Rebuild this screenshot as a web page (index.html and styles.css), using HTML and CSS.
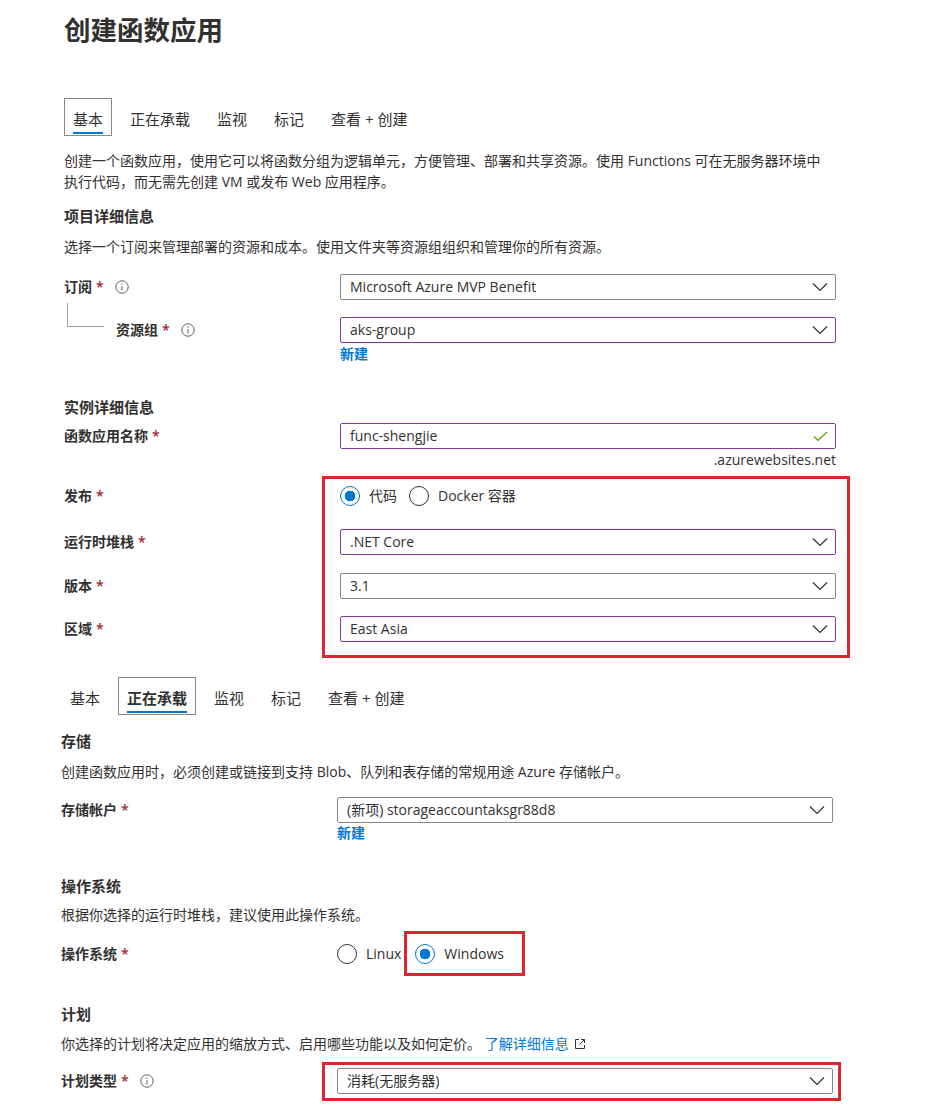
FILE: index.html
```html
<!DOCTYPE html>
<html lang="zh-CN">
<head>
<meta charset="utf-8">
<title>创建函数应用</title>
<link rel="stylesheet" href="styles.css">
</head>
<body>
<div class="page">
  <section class="part part-a">
    <h1 class="title">创建函数应用</h1>
    <nav class="tabs">
      <span class="tab active">基本</span>
      <span class="tab">正在承载</span>
      <span class="tab">监视</span>
      <span class="tab">标记</span>
      <span class="tab">查看 + 创建</span>
    </nav>
    <p class="desc mt14">创建一个函数应用，使用它可以将函数分组为逻辑单元，方便管理、部署和共享资源。使用 Functions 可在无服务器环境中<br>执行代码，而无需先创建 VM 或发布 Web 应用程序。</p>
    <h2 class="sub mt14">项目详细信息</h2>
    <p class="desc mt10">选择一个订阅来管理部署的资源和成本。使用文件夹等资源组组织和管理你的所有资源。</p>

    <div class="row mt17">
      <div class="label">订阅<span class="req">*</span>
        <svg class="info" width="14" height="14" viewBox="0 0 14 14"><circle cx="7" cy="7" r="6.2" fill="none" stroke="#605e5c" stroke-width="1"/><line x1="7" y1="6" x2="7" y2="10.5" stroke="#605e5c" stroke-width="1"/><circle cx="7" cy="4" r="0.7" fill="#605e5c"/></svg>
      </div>
      <div class="control"><div class="select"><span>Microsoft Azure MVP Benefit</span>
        <svg class="chev" width="16" height="10" viewBox="0 0 16 10"><path d="M1 1.5 L8 8.5 L15 1.5" fill="none" stroke="#323130" stroke-width="1.2"/></svg></div></div>
    </div>

    <div class="row mt17">
      <div class="label"><span class="tree"></span>资源组<span class="req">*</span>
        <svg class="info" width="14" height="14" viewBox="0 0 14 14"><circle cx="7" cy="7" r="6.2" fill="none" stroke="#605e5c" stroke-width="1"/><line x1="7" y1="6" x2="7" y2="10.5" stroke="#605e5c" stroke-width="1"/><circle cx="7" cy="4" r="0.7" fill="#605e5c"/></svg>
      </div>
      <div class="control"><div class="select dirty"><span>aks-group</span>
        <svg class="chev" width="16" height="10" viewBox="0 0 16 10"><path d="M1 1.5 L8 8.5 L15 1.5" fill="none" stroke="#323130" stroke-width="1.2"/></svg></div></div>
    </div>
    <div class="newlink mt1"><span class="link strong">新建</span></div>

    <h2 class="sub mt33">实例详细信息</h2>
    <div class="row mt6">
      <div class="label">函数应用名称<span class="req">*</span></div>
      <div class="control"><div class="select dirty"><span>func-shengjie</span>
        <svg class="check" width="15" height="11" viewBox="0 0 15 11"><path d="M1 5.5 L5 9.5 L14 1" fill="none" stroke="#57a300" stroke-width="1.2"/></svg></div></div>
    </div>
    <div class="suffix mt1">.azurewebsites.net</div>

    <div class="annot mt13">
      <div class="row">
        <div class="label">发布<span class="req">*</span></div>
        <div class="control radios">
          <span class="radio"><span class="dot on"></span>代码</span>
          <span class="radio"><span class="dot"></span>Docker 容器</span>
        </div>
      </div>
      <div class="row mt20">
        <div class="label">运行时堆栈<span class="req">*</span></div>
        <div class="control"><div class="select dirty"><span>.NET Core</span>
          <svg class="chev" width="16" height="10" viewBox="0 0 16 10"><path d="M1 1.5 L8 8.5 L15 1.5" fill="none" stroke="#323130" stroke-width="1.2"/></svg></div></div>
      </div>
      <div class="row mt18">
        <div class="label">版本<span class="req">*</span></div>
        <div class="control"><div class="select"><span>3.1</span>
          <svg class="chev" width="16" height="10" viewBox="0 0 16 10"><path d="M1 1.5 L8 8.5 L15 1.5" fill="none" stroke="#323130" stroke-width="1.2"/></svg></div></div>
      </div>
      <div class="row mt17">
        <div class="label">区域<span class="req">*</span></div>
        <div class="control"><div class="select dirty"><span>East Asia</span>
          <svg class="chev" width="16" height="10" viewBox="0 0 16 10"><path d="M1 1.5 L8 8.5 L15 1.5" fill="none" stroke="#323130" stroke-width="1.2"/></svg></div></div>
      </div>
      <div class="mark mark-a"></div>
    </div>
  </section>

  <section class="part part-b">
    <nav class="tabs mt35">
      <span class="tab">基本</span>
      <span class="tab active bold">正在承载</span>
      <span class="tab">监视</span>
      <span class="tab">标记</span>
      <span class="tab">查看 + 创建</span>
    </nav>
    <h2 class="sub mt16">存储</h2>
    <p class="desc mt10">创建函数应用时，必须创建或链接到支持 Blob、队列和表存储的常规用途 Azure 存储帐户。</p>
    <div class="row mt15">
      <div class="label">存储帐户<span class="req">*</span></div>
      <div class="control"><div class="select"><span>(新项) storageaccountaksgr88d8</span>
        <svg class="chev" width="16" height="10" viewBox="0 0 16 10"><path d="M1 1.5 L8 8.5 L15 1.5" fill="none" stroke="#323130" stroke-width="1.2"/></svg></div></div>
    </div>
    <div class="newlink"><span class="link strong">新建</span></div>

    <h2 class="sub mt33">操作系统</h2>
    <p class="desc mt8">根据你选择的运行时堆栈，建议使用此操作系统。</p>
    <div class="row annot mt16">
      <div class="label">操作系统<span class="req">*</span></div>
      <div class="control radios">
        <span class="radio wide"><span class="dot"></span>Linux</span>
        <span class="radio"><span class="dot on"></span>Windows</span>
      </div>
      <div class="mark mark-b"></div>
    </div>

    <h2 class="sub mt37">计划</h2>
    <p class="desc mt9">你选择的计划将决定应用的缩放方式、启用哪些功能以及如何定价。 <span class="link">了解详细信息</span>
      <svg class="ext" width="12" height="12" viewBox="0 0 12 12"><path d="M5 1.5 H1.5 V10.5 H10.5 V7" fill="none" stroke="#323130" stroke-width="1"/><path d="M7 1.5 H10.5 V5 M10.5 1.5 L5.5 6.5" fill="none" stroke="#323130" stroke-width="1"/></svg></p>
    <div class="row annot mt14">
      <div class="label">计划类型<span class="req">*</span>
        <svg class="info" width="14" height="14" viewBox="0 0 14 14"><circle cx="7" cy="7" r="6.2" fill="none" stroke="#605e5c" stroke-width="1"/><line x1="7" y1="6" x2="7" y2="10.5" stroke="#605e5c" stroke-width="1"/><circle cx="7" cy="4" r="0.7" fill="#605e5c"/></svg>
      </div>
      <div class="control"><div class="select"><span>消耗(无服务器)</span>
        <svg class="chev" width="16" height="10" viewBox="0 0 16 10"><path d="M1 1.5 L8 8.5 L15 1.5" fill="none" stroke="#323130" stroke-width="1.2"/></svg></div></div>
      <div class="mark mark-c"></div>
    </div>
  </section>
</div>
</body>
</html>
```

FILE: styles.css
```css
* { box-sizing: border-box; }
html, body { margin: 0; padding: 0; background: #ffffff; }
body {
  color: #323130;
  font-family: "Open Sans", "Noto Sans CJK SC", sans-serif;
  font-size: 14px;
  line-height: 20px;
}
.page { width: 925px; min-height: 1114px; padding-bottom: 16px; }
.part { width: 833px; }
.part-a { padding-left: 64px; width: 836px; }
.part-b { padding-left: 61px; }

.title {
  margin: 11px 0 0;
  font-family: "Noto Sans CJK SC", sans-serif;
  font-size: 26.5px;
  line-height: 36px;
  font-weight: 700;
  color: #323130;
}

.tabs { display: flex; gap: 9px; height: 38px; margin-top: 51px; }
.tab {
  position: relative;
  height: 38px;
  padding: 2px 8px 0;
  border: 1px solid transparent;
  font-size: 15px;
  line-height: 36px;
  white-space: nowrap;
}
.tab.active { border-color: #8a8886; }
.tab.bold { font-weight: 600; }
.tab.active::after {
  content: "";
  position: absolute;
  left: 8px;
  right: 8px;
  bottom: 1px;
  height: 2px;
  background: #0078d4;
}

.desc { margin: 0; font-size: 14px; line-height: 21px; }
.sub { margin: 0; font-size: 15px; line-height: 20px; font-weight: 600; }

.row { display: flex; height: 26px; }
.label {
  width: 276px;
  flex: none;
  display: flex;
  align-items: center;
  height: 26px;
  font-weight: 600;
  white-space: nowrap;
}
.req { color: #a4262c; margin-left: 4px; font-weight: 600; }
.info { margin-left: 11px; flex: none; }
.tree {
  flex: none;
  align-self: flex-start;
  width: 37px;
  height: 24px;
  margin: -14px 12px 0 3px;
  border-left: 1px solid #a19f9d;
  border-bottom: 1px solid #a19f9d;
}
.control { width: 496px; flex: none; }
.select {
  height: 26px;
  border: 1px solid #8a8886;
  border-radius: 2px;
  display: flex;
  align-items: center;
  justify-content: space-between;
  padding: 0 7px 0 9px;
  white-space: nowrap;
}
.select.dirty { border-color: #86399a; }
.chev, .check { flex: none; }

.newlink { padding-left: 276px; line-height: 20px; }
.link { color: #0078d4; }
.strong { font-weight: 600; }
.ext { vertical-align: -1px; margin-left: 2px; }

.suffix { width: 772px; text-align: right; line-height: 20px; }

.radios { display: flex; align-items: center; height: 26px; }
.radio { display: flex; align-items: center; margin-right: 12px; white-space: nowrap; }
.radio.wide { margin-right: 14px; }
.dot {
  width: 20px;
  height: 20px;
  border: 1px solid #323130;
  border-radius: 50%;
  margin-right: 9px;
  flex: none;
  background: #fff;
}
.dot.on {
  border-color: #0078d4;
  background: radial-gradient(circle, #0078d4 0 5px, #ffffff 5.6px);
}

.annot { position: relative; }
.mark { position: absolute; border: 3px solid #df2630; pointer-events: none; }
.mark-a { left: 258px; top: -7px; width: 528px; height: 182px; }
.mark-b { left: 343px; top: -10px; width: 121px; height: 45px; }
.mark-c { left: 261px; top: -6px; width: 519px; height: 39px; }

.mt1 { margin-top: 1px; }
.mt6 { margin-top: 6px; }
.mt8 { margin-top: 8px; }
.mt9 { margin-top: 9px; }
.mt10 { margin-top: 10px; }
.mt13 { margin-top: 13px; }
.mt14 { margin-top: 14px; }
.mt15 { margin-top: 15px; }
.mt16 { margin-top: 16px; }
.mt17 { margin-top: 17px; }
.mt18 { margin-top: 18px; }
.mt20 { margin-top: 20px; }
.mt33 { margin-top: 33px; }
.mt35 { margin-top: 35px; }
.mt37 { margin-top: 37px; }
```
